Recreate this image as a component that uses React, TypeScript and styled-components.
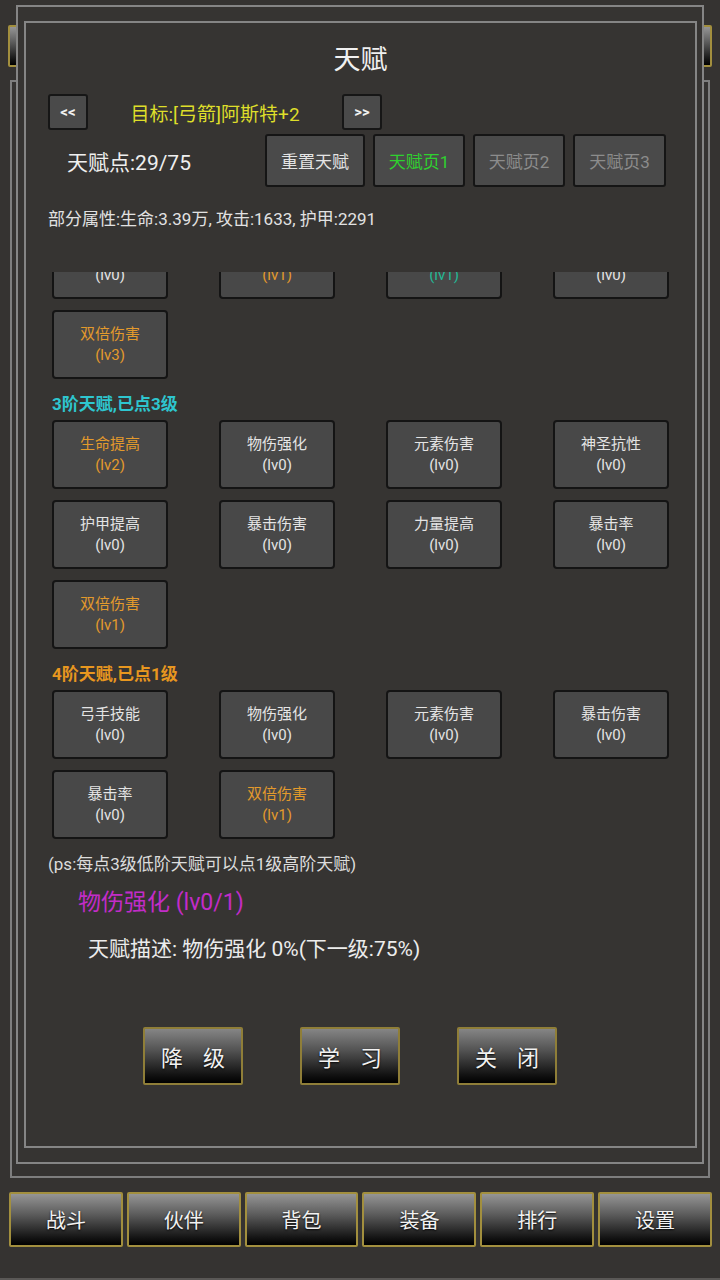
import { useLayoutEffect, useRef } from 'react';
import styled, { createGlobalStyle } from 'styled-components';

const GlobalStyle = createGlobalStyle`
  html, body {
    margin: 0;
    padding: 0;
    background: #353331;
  }
  body {
    font-family: Roboto, "Noto Sans CJK SC", sans-serif;
    color: #e2e2e2;
  }
`;

type Tone = 'white' | 'orange' | 'teal' | 'green' | 'gray';

const toneColor = (tone: Tone) => {
  if (tone === 'orange') return '#e39a2c';
  if (tone === 'teal') return '#23b896';
  if (tone === 'green') return '#2fd12f';
  if (tone === 'gray') return '#8c8c8c';
  return '#e4e4e4';
};

const Screen = styled.div`
  position: relative;
  width: 720px;
  height: 1280px;
  display: flex;
  flex-direction: column;
  padding-top: 25px;
  box-sizing: border-box;
  overflow: hidden;
`;

const TopBar = styled.div`
  display: flex;
  justify-content: space-between;
  padding: 0 8px;
  height: 42px;
`;

const GoldButton = styled.div<{ $w: number }>`
  width: ${(p) => p.$w}px;
  height: 100%;
  box-sizing: border-box;
  border: 2px solid #a28f3e;
  border-radius: 2px;
  background: linear-gradient(to bottom, #959595 0%, #5c5c5c 40%, #151515 85%, #000 100%);
  display: flex;
  align-items: center;
  justify-content: center;
  color: #f2f2f2;
  font-size: 20px;
  white-space: nowrap;
  text-shadow: 0 1px 2px #000;
`;

const OuterFrame = styled.div`
  margin: 13px 10px 0;
  height: 1098px;
  border: 2px solid #7e7e7e;
  box-sizing: border-box;
`;

const BottomNav = styled.div`
  display: flex;
  gap: 4px;
  margin-top: 14px;
  padding: 0 8px 0 9px;
  height: 55px;
`;

const NavButton = styled(GoldButton)`
  flex: 1;
  font-size: 20px;
`;

const Footer = styled.div`
  flex: 1;
  border-bottom: 2px solid #5a5856;
`;

/* the talent dialog lies over the whole game screen */
const Dialog = styled.div`
  position: absolute;
  left: 16px;
  top: 5px;
  width: 688px;
  height: 1159px;
  box-sizing: border-box;
  border: 2px solid #858585;
  background: #363432;
  padding: 14px 5px 14px 6px;
`;

const Panel = styled.div`
  height: 100%;
  box-sizing: border-box;
  border: 2px solid #858585;
  display: flex;
  flex-direction: column;
`;

const Title = styled.div`
  margin-top: 19px;
  height: 36px;
  line-height: 36px;
  text-align: center;
  font-size: 27px;
  color: #f0f0f0;
`;

const NavRow = styled.div`
  margin-top: 16px;
  height: 36px;
  display: flex;
  align-items: center;
  padding-left: 22px;
`;

const SmallButton = styled.div`
  width: 40px;
  height: 36px;
  box-sizing: border-box;
  border: 2px solid #161616;
  border-radius: 3px;
  background: #4a4a4a;
  display: flex;
  align-items: center;
  justify-content: center;
  color: #f0f0f0;
  font-size: 15px;
  font-weight: bold;
`;

const Target = styled.div`
  width: 254px;
  text-align: center;
  color: #dede2a;
  font-size: 19px;
`;

const PointsRow = styled.div`
  margin-top: 4px;
  height: 53px;
  display: flex;
  align-items: center;
  padding-left: 41px;
`;

const Points = styled.div`
  width: 198px;
  font-size: 21px;
  color: #efefef;
`;

const PageButtons = styled.div`
  display: flex;
  gap: 8px;
  height: 100%;
`;

const PageButton = styled.div<{ $tone: Tone; $w: number }>`
  width: ${(p) => p.$w}px;
  height: 100%;
  box-sizing: border-box;
  border: 2px solid #151515;
  border-radius: 3px;
  background: #4a4a4a;
  display: flex;
  align-items: center;
  justify-content: center;
  font-size: 17px;
  color: ${(p) => toneColor(p.$tone)};
`;

const AttrLine = styled.div`
  margin-top: 20px;
  padding-left: 22px;
  line-height: 24px;
  font-size: 17px;
  color: #e2e2e2;
`;

const Scroller = styled.div`
  margin-top: 41px;
  height: 608px;
  overflow-y: auto;
  scrollbar-width: none;
  &::-webkit-scrollbar {
    display: none;
  }
`;

const TierLabel = styled.div<{ $tone: Tone }>`
  padding: 13px 0 4px 26px;
  line-height: 24px;
  font-size: 17px;
  font-weight: bold;
  color: ${(p) => (p.$tone === 'teal' ? '#2ec6cf' : '#e8971f')};
`;

const Grid = styled.div`
  display: grid;
  grid-template-columns: repeat(4, 116px);
  grid-auto-rows: 69px;
  column-gap: 51px;
  row-gap: 11px;
  padding-left: 26px;
`;

const Cell = styled.div<{ $tone: Tone }>`
  box-sizing: border-box;
  border: 2px solid #141414;
  border-radius: 4px;
  background: #484848;
  display: flex;
  flex-direction: column;
  align-items: center;
  justify-content: center;
  font-size: 15px;
  line-height: 21px;
  color: ${(p) => toneColor(p.$tone)};
`;

const Note = styled.div`
  margin-top: 13px;
  padding: 0 0 24px 22px;
  line-height: 24px;
  font-size: 17px;
  color: #dcdcdc;
`;

const SelectedName = styled.div`
  margin-top: 7px;
  padding-left: 52px;
  line-height: 32px;
  font-size: 23px;
  color: #c22cc8;
`;

const Description = styled.div`
  margin-top: 14px;
  padding-left: 62px;
  line-height: 32px;
  font-size: 21px;
  color: #ececec;
`;

const ActionRow = styled.div`
  margin-top: 62px;
  height: 58px;
  display: flex;
  gap: 57px;
  padding-left: 117px;
`;

const ActionButton = styled(GoldButton)`
  font-size: 22px;
  gap: 20px;
  border-color: #8f7e38;
  background: linear-gradient(to bottom, #858585 0%, #525252 40%, #121212 85%, #000 100%);
`;

type Talent = { name: string; lv: number; tone: Tone };

const tiers: { label: string; tone: Tone; items: Talent[] }[] = [
  {
    label: '2阶天赋,已点5级',
    tone: 'teal',
    items: [
      { name: '生命提高', lv: 0, tone: 'white' },
      { name: '物伤强化', lv: 1, tone: 'orange' },
      { name: '元素伤害', lv: 1, tone: 'teal' },
      { name: '暴击率', lv: 0, tone: 'white' },
      { name: '双倍伤害', lv: 3, tone: 'orange' },
    ],
  },
  {
    label: '3阶天赋,已点3级',
    tone: 'teal',
    items: [
      { name: '生命提高', lv: 2, tone: 'orange' },
      { name: '物伤强化', lv: 0, tone: 'white' },
      { name: '元素伤害', lv: 0, tone: 'white' },
      { name: '神圣抗性', lv: 0, tone: 'white' },
      { name: '护甲提高', lv: 0, tone: 'white' },
      { name: '暴击伤害', lv: 0, tone: 'white' },
      { name: '力量提高', lv: 0, tone: 'white' },
      { name: '暴击率', lv: 0, tone: 'white' },
      { name: '双倍伤害', lv: 1, tone: 'orange' },
    ],
  },
  {
    label: '4阶天赋,已点1级',
    tone: 'orange',
    items: [
      { name: '弓手技能', lv: 0, tone: 'white' },
      { name: '物伤强化', lv: 0, tone: 'white' },
      { name: '元素伤害', lv: 0, tone: 'white' },
      { name: '暴击伤害', lv: 0, tone: 'white' },
      { name: '暴击率', lv: 0, tone: 'white' },
      { name: '双倍伤害', lv: 1, tone: 'orange' },
    ],
  },
];

const navItems = ['战斗', '伙伴', '背包', '装备', '排行', '设置'];
const actions = ['降级', '学习', '关闭'];

export default function App() {
  const scrollRef = useRef<HTMLDivElement>(null);

  // the list is scrolled a little, as in the game
  useLayoutEffect(() => {
    if (scrollRef.current) scrollRef.current.scrollTop = 83;
  }, []);

  return (
    <Screen>
      <GlobalStyle />
      <TopBar>
        <GoldButton $w={110}>地图</GoldButton>
        <GoldButton $w={110}>任务</GoldButton>
      </TopBar>
      <OuterFrame />
      <BottomNav>
        {navItems.map((item) => (
          <NavButton key={item} $w={0}>
            {item}
          </NavButton>
        ))}
      </BottomNav>
      <Footer />

      <Dialog>
        <Panel>
          <Title>天赋</Title>
          <NavRow>
            <SmallButton>&lt;&lt;</SmallButton>
            <Target>目标:[弓箭]阿斯特+2</Target>
            <SmallButton>&gt;&gt;</SmallButton>
          </NavRow>
          <PointsRow>
            <Points>天赋点:29/75</Points>
            <PageButtons>
              <PageButton $tone="white" $w={100}>重置天赋</PageButton>
              <PageButton $tone="green" $w={92}>天赋页1</PageButton>
              <PageButton $tone="gray" $w={92}>天赋页2</PageButton>
              <PageButton $tone="gray" $w={93}>天赋页3</PageButton>
            </PageButtons>
          </PointsRow>
          <AttrLine>部分属性:生命:3.39万, 攻击:1633, 护甲:2291</AttrLine>

          <Scroller ref={scrollRef}>
            {tiers.map((tier) => (
              <div key={tier.label}>
                <TierLabel $tone={tier.tone}>{tier.label}</TierLabel>
                <Grid>
                  {tier.items.map((t, i) => (
                    <Cell key={i} $tone={t.tone}>
                      <span>{t.name}</span>
                      <span>(lv{t.lv})</span>
                    </Cell>
                  ))}
                </Grid>
              </div>
            ))}
            <Note>(ps:每点3级低阶天赋可以点1级高阶天赋)</Note>
          </Scroller>

          <SelectedName>物伤强化 (lv0/1)</SelectedName>
          <Description>天赋描述: 物伤强化 0%(下一级:75%)</Description>

          <ActionRow>
            {actions.map((a) => (
              <ActionButton key={a} $w={100}>
                {a.split('').map((ch) => (
                  <span key={ch}>{ch}</span>
                ))}
              </ActionButton>
            ))}
          </ActionRow>
        </Panel>
      </Dialog>
    </Screen>
  );
}
